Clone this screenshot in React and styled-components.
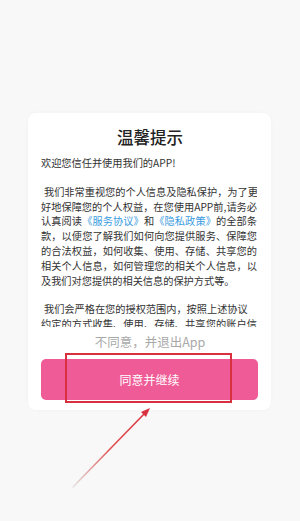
import styled, { createGlobalStyle } from 'styled-components'

const Global = createGlobalStyle`
    html, body {
        margin:0;
        padding:0;
        background:#f8f8f8;
    }
    body {
        font-family:"Noto Sans CJK SC", "Noto Sans", sans-serif;
    }
`

const Screen = styled.div`
    position:relative;
    width:300px;
    height:521px;
    overflow:hidden;
    background:#f8f8f8;
    padding-top:113px;
    box-sizing:border-box;
`

const Card = styled.div`
    margin-left:28px;
    width:243px;
    background:#fff;
    border-radius:8px;
    padding:12px 12px 10px 13px;
    box-sizing:border-box;
    display:flex;
    flex-direction:column;
    box-shadow:0 0 4px rgba(0,0,0,.03);
`

const Title = styled.h2`
    margin:0;
    font-size:16.5px;
    line-height:24px;
    font-weight:500;
    color:#222;
    text-align:center;
`

const Scroll = styled.div`
    margin-top:6.5px;
    height:171.5px;
    overflow:hidden;
    font-size:10.2px;
    line-height:14.9px;
    color:#333;
    width:216px;
`

const Para = styled.div`
    margin-bottom:${p => p.gap}px;
`

const Line = styled.div`
    white-space:nowrap;
    text-align:${p => p.full ? 'justify' : 'left'};
    text-align-last:${p => p.full ? 'justify' : 'left'};
    padding-left:${p => p.indent ? '3px' : '0'};
`

const Link = styled.span`
    color:#3a9be0;
`

const Decline = styled.div`
    margin-top:6px;
    text-align:center;
    font-size:12.5px;
    line-height:18px;
    color:#a9a9a9;
`

const Agree = styled.button`
    margin-top:8px;
    height:41px;
    width:217px;
    border:none;
    border-radius:5px;
    background:#ef5b97;
    color:#fff;
    font-family:inherit;
    font-size:12px;
`

const Marker = styled.div`
    position:absolute;
    left:65px;
    top:353px;
    width:167px;
    height:50px;
    border:2px solid #d8303e;
    box-sizing:border-box;
`

const Arrow = styled.svg`
    position:absolute;
    left:0;
    top:0;
    pointer-events:none;
`

const App = () => {
    return <Screen>
        <Global />
        <Card>
            <Title>温馨提示</Title>
            <Scroll>
                <Para gap={14.2}>
                    <Line>欢迎您信任并使用我们的APP!</Line>
                </Para>
                <Para gap={12.7}>
                    <Line full indent>我们非常重视您的个人信息及隐私保护，为了更</Line>
                    <Line full>好地保障您的个人权益，在您使用APP前,请务必</Line>
                    <Line full>认真阅读<Link>《服务协议》</Link>和<Link>《隐私政策》</Link>的全部条</Line>
                    <Line full>款，以便您了解我们如何向您提供服务、保障您</Line>
                    <Line full>的合法权益，如何收集、使用、存储、共享您的</Line>
                    <Line full>相关个人信息，如何管理您的相关个人信息，以</Line>
                    <Line>及我们对您提供的相关信息的保护方式等。</Line>
                </Para>
                <Para gap={0}>
                    <Line indent>我们会严格在您的授权范围内，按照上述协议</Line>
                    <Line full>约定的方式收集、使用、存储、共享您的账户信</Line>
                    <Line>息。</Line>
                </Para>
            </Scroll>
            <Decline>不同意，并退出App</Decline>
            <Agree>同意并继续</Agree>
        </Card>

        <Marker />
        <Arrow width="300" height="521" viewBox="0 0 300 521">
            <defs>
                <linearGradient id="arrowFade" x1="73" y1="487" x2="149" y2="409" gradientUnits="userSpaceOnUse">
                    <stop offset="0" stopColor="#e4e4e4" />
                    <stop offset="0.5" stopColor="#e05050" />
                    <stop offset="1" stopColor="#d9303f" />
                </linearGradient>
            </defs>
            <line x1="73" y1="487" x2="146" y2="412" stroke="url(#arrowFade)" strokeWidth="1.6" strokeLinecap="round" />
            <polygon points="150,408 141,412 146,417" fill="#d9303f" />
        </Arrow>
    </Screen>
}

export default App
